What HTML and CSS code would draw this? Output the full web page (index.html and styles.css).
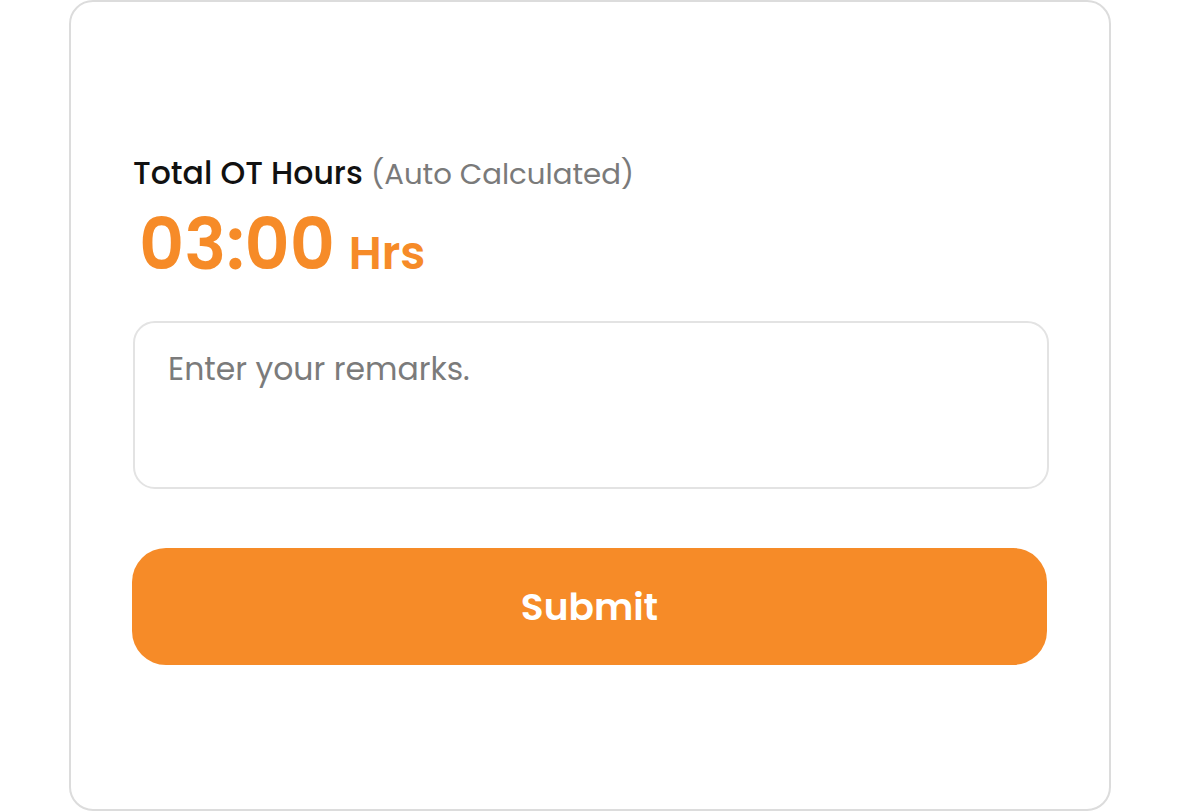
FILE: index.html
```html
<!DOCTYPE html>
<html lang="en">

<head>
    <meta charset="UTF-8">
    <meta name="viewport" content="width=device-width, initial-scale=1.0">
    <title>OT Hours</title>
    <link rel="stylesheet" href="styles.css">
</head>

<body>
    <div class="card">
        <!-- Total hours -->
        <div class="total">
            <p class="label">Total OT Hours <span class="hint">(Auto Calculated)</span></p>
            <p class="hours">03:00 <span class="unit">Hrs</span></p>
        </div>

        <!-- Remarks -->
        <textarea class="remarks" placeholder="Enter your remarks."></textarea>

        <button class="submit" type="button">Submit</button>
    </div>
</body>

</html>
```
FILE: styles.css
```css
body {
    margin: 0;
    background: #fff;
    font-family: "Poppins", "Inter", "Noto Sans", sans-serif;
}

.card {
    box-sizing: border-box;
    width: 1042px;
    height: 811px;
    margin-left: 69px;
    padding: 148px 61px 0 62px;
    border: 2px solid #dcdcdc;
    border-radius: 24px;
    display: flex;
    flex-direction: column;
}

.total {
    margin-bottom: 28px;
}

.label {
    margin: 0;
    font-size: 31.5px;
    line-height: 46px;
    color: #111;
    font-weight: 500;
}

.hint {
    color: #7a7a7a;
    font-size: 29.2px;
    font-weight: 400;
}

.hours {
    margin: 8px 0 0 6px;
    font-size: 70px;
    line-height: 80px;
    font-weight: 600;
    color: #f68b28;
}

.unit {
    font-size: 46px;
    margin-left: -3px;
}

.remarks {
    box-sizing: border-box;
    width: 916px;
    height: 168px;
    padding: 24px 33px;
    border: 2px solid #e3e3e3;
    border-radius: 22px;
    font-family: inherit;
    font-size: 31.5px;
    line-height: 44px;
    color: #333;
    resize: none;
    outline: none;
}

.remarks::placeholder {
    color: #7b7b7b;
}

.submit {
    width: 915px;
    height: 117px;
    margin-top: 59px;
    margin-left: -1px;
    border: none;
    border-radius: 34px;
    background: #f68b28;
    color: #fff;
    font-family: inherit;
    font-size: 37.5px;
    font-weight: 600;
}
```
